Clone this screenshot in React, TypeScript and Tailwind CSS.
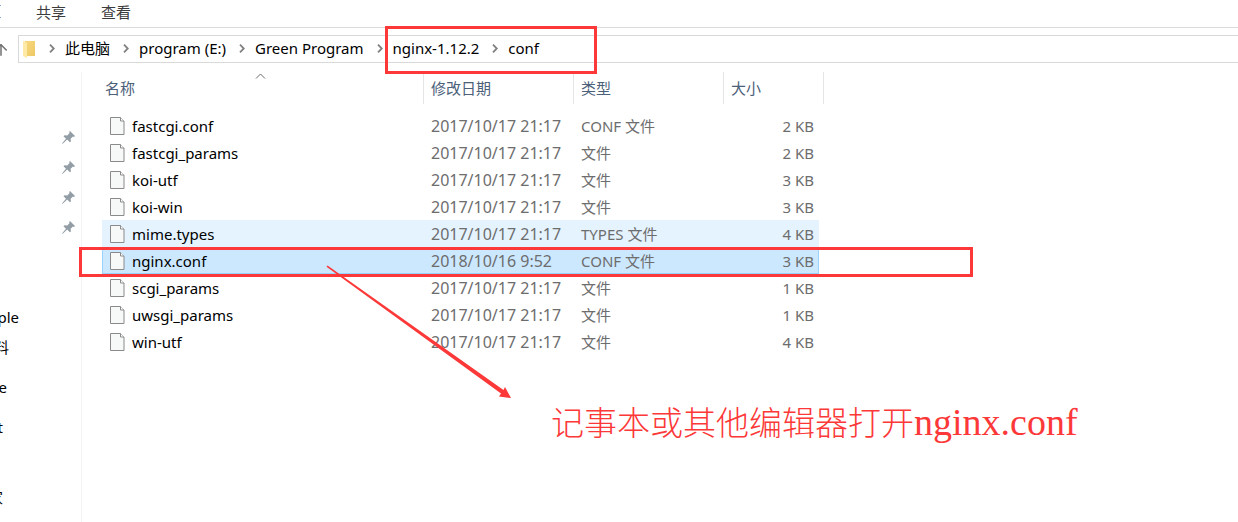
import { ArrowUp } from "lucide-react";

type FileItem = {
  name: string;
  date: string;
  type: string;
  size: string;
  state?: "hover" | "selected";
};

const files: FileItem[] = [
  { name: "fastcgi.conf", date: "2017/10/17 21:17", type: "CONF 文件", size: "2 KB" },
  { name: "fastcgi_params", date: "2017/10/17 21:17", type: "文件", size: "2 KB" },
  { name: "koi-utf", date: "2017/10/17 21:17", type: "文件", size: "3 KB" },
  { name: "koi-win", date: "2017/10/17 21:17", type: "文件", size: "3 KB" },
  { name: "mime.types", date: "2017/10/17 21:17", type: "TYPES 文件", size: "4 KB", state: "hover" },
  { name: "nginx.conf", date: "2018/10/16 9:52", type: "CONF 文件", size: "3 KB", state: "selected" },
  { name: "scgi_params", date: "2017/10/17 21:17", type: "文件", size: "1 KB" },
  { name: "uwsgi_params", date: "2017/10/17 21:17", type: "文件", size: "1 KB" },
  { name: "win-utf", date: "2017/10/17 21:17", type: "文件", size: "4 KB" },
];

const rowStyles = {
  none: "",
  hover: "bg-[#e5f3ff]",
  selected: "bg-[#cce8ff] outline outline-1 -outline-offset-1 outline-[#99d1ff]",
};

function FolderIcon() {
  return (
    <svg width="13" height="18" viewBox="0 0 13 18" aria-hidden="true">
      <defs>
        <linearGradient id="folder" x1="0" y1="0" x2="1" y2="1">
          <stop offset="0" stopColor="#f7d97c" />
          <stop offset="1" stopColor="#efc866" />
        </linearGradient>
      </defs>
      <path d="M2 1h10v15H2z" fill="url(#folder)" />
      <path d="M0 1l4 2v15l-4-2z" fill="#ffe9a6" />
    </svg>
  );
}

function FileIcon() {
  return (
    <svg width="15" height="18" viewBox="0 0 15 18" aria-hidden="true" className="shrink-0">
      <path d="M.5.5h10l3.5 3.5v13.5H.5z" fill="#f7f8f8" stroke="#8a8a8a" />
      <path d="M10.5.5v3.5h3.5" fill="#fff" stroke="#8a8a8a" />
    </svg>
  );
}

function PinIcon() {
  return (
    <svg width="13" height="13" viewBox="0 0 13 13" aria-hidden="true">
      <path
        d="M8 0l5 5-1 1-1-.4-2.4 2.2.3 2.6-1 .9-2.7-2.7L1 12.6.1 13l.3-.9L4 7.8 1.5 5.2l1-.9 2.8.2L7.6 2 7.2.9z"
        fill="#929da6"
      />
    </svg>
  );
}

function Crumb({ children }: { children: string }) {
  return (
    <li className="flex items-center">
      <svg width="6" height="9" viewBox="0 0 6 9" aria-hidden="true" className="ml-[13px] mr-2.5">
        <path d="M1 .7l3.8 3.8L1 8.3" fill="none" stroke="#808080" strokeWidth="1.8" />
      </svg>
      <a href="#" className="whitespace-nowrap">
        {children}
      </a>
    </li>
  );
}

export default function App() {
  return (
    <div className="relative flex min-h-screen flex-col overflow-hidden bg-white font-['Noto_Sans','Noto_Sans_CJK_SC',sans-serif] text-[15px] leading-6 text-black">
      {/* Ribbon tabs */}
      <nav className="flex h-7 border-b border-[#dadbdc] text-[#3c3c3c]">
        <span className="mr-[35px] mt-[5px] h-[13px] w-px border-y border-[#7fa8d8]" />
        <button className="mr-[35px] pb-1.5">共享</button>
        <button className="pb-1.5">查看</button>
      </nav>

      {/* Address bar */}
      <div className="flex h-11 items-center pb-0.5">
        <button aria-label="Up" className="-ml-2 mr-2 pt-0.5">
          <ArrowUp className="h-[18px] w-[18px] text-[#707070]" />
        </button>
        <div className="flex h-7 flex-1 items-center border border-r-0 border-[#d9d9d9] pl-1">
          <FolderIcon />
          <ol className="flex items-center pb-0.5">
            <Crumb>此电脑</Crumb>
            <Crumb>program (E:)</Crumb>
            <Crumb>Green Program</Crumb>
            <Crumb>nginx-1.12.2</Crumb>
            <Crumb>conf</Crumb>
          </ol>
        </div>
      </div>

      <div className="flex flex-1">
        {/* Quick access pane, scrolled so that its labels run off the left */}
        <aside className="w-[82px] shrink-0 border-r border-[#f3f3f3]">
          <div className="flex flex-col items-end gap-[17px] pr-1.5 pt-[59px]">
            <PinIcon />
            <PinIcon />
            <PinIcon />
            <PinIcon />
          </div>
          <ul className="pt-[71px]">
            <li className="flex h-[30px] w-[19px] justify-end overflow-hidden">ple</li>
            <li className="flex h-10 w-[9px] justify-end overflow-hidden">料</li>
            <li className="flex h-10 w-[7px] justify-end overflow-hidden">e</li>
            <li className="flex h-[70px] w-[3px] justify-end overflow-hidden">t</li>
            <li className="flex h-6 w-[3px] justify-end overflow-hidden">家</li>
          </ul>
        </aside>

        {/* File list */}
        <main className="pl-5">
          <table className="w-[717px] table-fixed border-separate border-spacing-0 text-left">
            <colgroup>
              <col className="w-[322px]" />
              <col className="w-[150px]" />
              <col className="w-[150px]" />
              <col />
            </colgroup>
            <thead className="text-[#4c607a]">
              <tr className="h-8">
                <th className="relative border-r border-[#e5e5e5] pl-[3px] font-normal">
                  名称
                  <svg
                    width="11"
                    height="6"
                    viewBox="0 0 11 6"
                    aria-hidden="true"
                    className="absolute left-[153px] top-px"
                  >
                    <path d="M1 5.5l4.5-4.5L10 5.5" fill="none" stroke="#6d6d6d" />
                  </svg>
                </th>
                <th className="border-r border-[#e5e5e5] pl-[7px] font-normal">修改日期</th>
                <th className="border-r border-[#e5e5e5] pl-[7px] font-normal">类型</th>
                <th className="relative pl-[7px] font-normal">
                  大小
                  <span className="absolute -right-[5px] top-0 h-full border-r border-[#e5e5e5]" />
                </th>
              </tr>
            </thead>
            <tbody className="text-[#6d6d6d]">
              <tr className="h-2">
                <td colSpan={4} className="p-0" />
              </tr>
              {files.map((file) => (
                <tr key={file.name} className={`h-[27px] ${rowStyles[file.state ?? "none"]}`}>
                  <td className="py-0 pl-2 text-black">
                    <div className="flex items-center gap-[7px]">
                      <FileIcon />
                      <span>{file.name}</span>
                    </div>
                  </td>
                  <td className="py-0 pl-[7px] text-base leading-6">{file.date}</td>
                  <td className="py-0 pl-[7px]">{file.type}</td>
                  <td className="py-0 pr-[5px] text-right">{file.size}</td>
                </tr>
              ))}
            </tbody>
          </table>
        </main>
      </div>

      {/* Annotations */}
      <div className="absolute left-[385px] top-[26px] h-12 w-[212px] border-[3px] border-[#fc3838]" />
      <div className="absolute left-[79px] top-[247px] h-[30px] w-[894px] border-[3px] border-[#fc3838]" />
      <svg
        width="186"
        height="134"
        viewBox="0 0 186 134"
        aria-hidden="true"
        className="absolute left-[326px] top-[265px]"
      >
        <path d="M1.5.5L177.5 125l1.5-3 6 11-12-1.5 2-3L.5 1.8z" fill="#fc3838" />
      </svg>
      <p className="absolute left-[551px] top-[401px] whitespace-nowrap font-['Noto_Sans_CJK_SC',sans-serif] text-[33px] font-light leading-10 text-[#fc3838]">
        记事本或其他编辑器打开
        <span className="font-['Liberation_Serif',serif] text-[38px]">nginx.conf</span>
      </p>
    </div>
  );
}
